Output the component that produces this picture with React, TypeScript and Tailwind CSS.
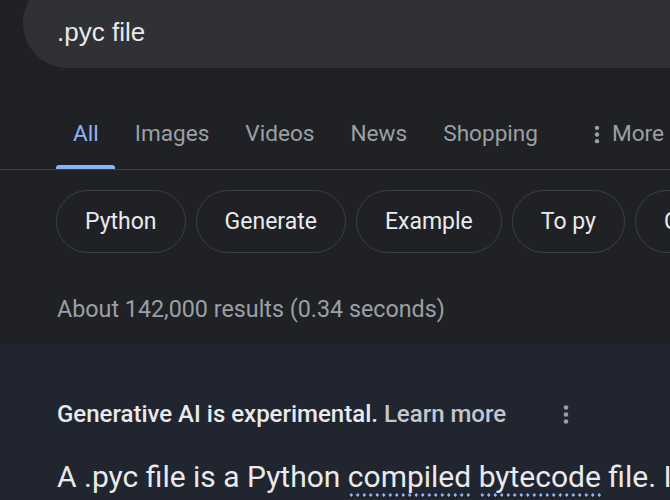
const tabs = ['All', 'Images', 'Videos', 'News', 'Shopping']
const chips = ['Python', 'Generate', 'Example', 'To py', 'Convert']

function Dots({ className }: { className?: string }) {
  return (
    <svg viewBox="0 0 6 20" className={className} fill="currentColor">
      <circle cx="3" cy="3" r="2.3" />
      <circle cx="3" cy="10" r="2.3" />
      <circle cx="3" cy="17" r="2.3" />
    </svg>
  )
}

function Dotted({ children }: { children: string }) {
  return (
    <span className="bg-[radial-gradient(circle,#8ab4f8_1.5px,transparent_1.7px)] bg-[length:6.5px_4px] bg-repeat-x bg-[position:0_100%] pb-[3px]">
      {children}
    </span>
  )
}

export default function App() {
  return (
    <div className="w-[670px] h-[500px] overflow-hidden bg-[#202124] font-['Roboto',sans-serif]">
      {/* search box, cut off at the top */}
      <div className="ml-[23px] -mt-[22px] h-[90px] rounded-l-[45px] bg-[#303134] flex items-center pt-[18px] pl-[34px]">
        <span className="font-['Liberation_Sans',Arial,sans-serif] text-[26px] text-[#e8eaed]">.pyc file</span>
      </div>

      {/* tabs */}
      <div className="flex gap-[36px] pl-[73px] border-b border-[#3c4043] whitespace-nowrap">
        {tabs.map((t, i) => (
          <div
            key={t}
            className={`relative pt-[52px] pb-[21px] text-[22.6px] leading-[28px] ${i === 0 ? 'text-[#8ab4f8]' : 'text-[#9aa0a6]'}`}
          >
            {t}
            {i === 0 && (
              <span className="absolute bottom-0 -left-[17px] -right-[16px] h-[4px] rounded-t-[3px] bg-[#8ab4f8]" />
            )}
          </div>
        ))}
        <div className="flex items-center gap-[12px] pt-[52px] pb-[21px] text-[22.6px] leading-[28px] text-[#9aa0a6]">
          <Dots className="w-[6px] h-[19px] ml-[20px]" />
          More
        </div>
      </div>

      {/* refinement chips */}
      <div className="flex gap-[10px] pl-[56px] pt-[20px] whitespace-nowrap">
        {chips.map((c) => (
          <div
            key={c}
            className="h-[63px] shrink-0 flex items-center px-[28px] pt-[1px] rounded-full border border-[#3c4043] text-[23px] text-[#e8eaed]"
          >
            {c}
          </div>
        ))}
      </div>

      <div className="pl-[57px] pt-[42px] h-[92px] text-[23.3px] leading-[28px] text-[#9aa0a6]">
        About 142,000 results (0.34 seconds)
      </div>

      {/* AI overview */}
      <div className="bg-[#21252f] h-[200px] pl-[57px] pt-[55px]">
        <div className="flex items-center">
          <span className="text-[24px] leading-[28px] font-medium text-[#e8eaed]">
            Generative AI is experimental. <span className="text-[#c4c7d0]">Learn more</span>
          </span>
          <Dots className="w-[6px] h-[21px] ml-[57px] text-[#9aa0a6]" />
        </div>
        <div className="mt-[31px] text-[30px] leading-[36px] text-[#e8eaed] whitespace-nowrap">
          A .pyc file is a Python <Dotted>compiled</Dotted> <Dotted>bytecode</Dotted> file. It contains
        </div>
      </div>
    </div>
  )
}
